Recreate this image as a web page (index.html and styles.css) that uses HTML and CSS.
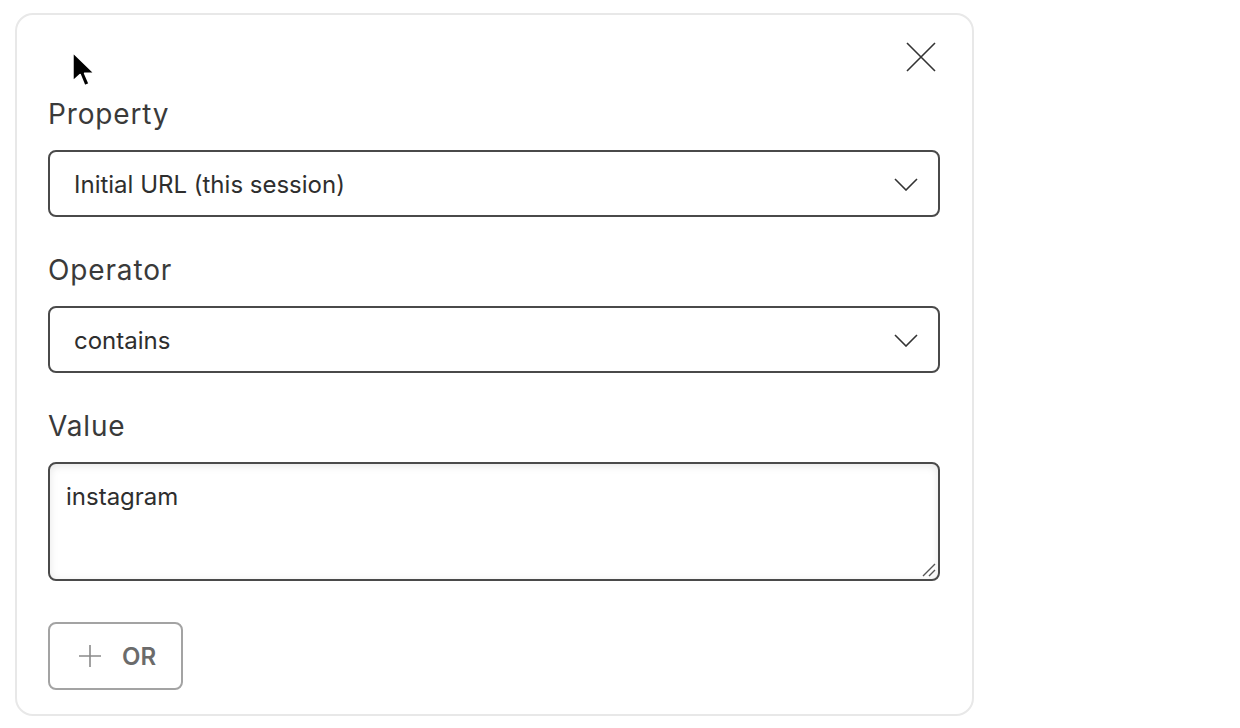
FILE: index.html
```html
<!DOCTYPE html>
<html>
<head>
<meta charset="utf-8">
<link rel="stylesheet" href="styles.css">
</head>
<body>
<div class="card">
  <div class="header">
    <svg class="close" width="30" height="30" viewBox="0 0 30 30"><path d="M1 1 L29 29 M29 1 L1 29" stroke="#333" stroke-width="1.6" fill="none"/></svg>
  </div>
  <div class="label first">Property</div>
  <div class="select">
    <span class="select-text">Initial URL (this session)</span>
    <svg class="chev" width="24" height="13" viewBox="0 0 24 13"><path d="M1 1 L12 12 L23 1" stroke="#333" stroke-width="1.6" fill="none"/></svg>
  </div>
  <div class="label">Operator</div>
  <div class="select">
    <span class="select-text">contains</span>
    <svg class="chev" width="24" height="13" viewBox="0 0 24 13"><path d="M1 1 L12 12 L23 1" stroke="#333" stroke-width="1.6" fill="none"/></svg>
  </div>
  <div class="label">Value</div>
  <div class="value-wrap">
    <textarea class="value">instagram</textarea>
    <svg class="grip" width="16" height="16" viewBox="0 0 16 16"><path d="M2 14 L14 2 M8 14 L14 8" stroke="#555" stroke-width="1.4" fill="none"/></svg>
  </div>
  <div class="actions">
    <button class="or-btn">
      <svg width="22" height="22" viewBox="0 0 22 22"><path d="M11 0 V22 M0 11 H22" stroke="#8a8a8a" stroke-width="1.6" fill="none"/></svg>
      <span>OR</span>
    </button>
  </div>
  <svg class="cursor" width="32" height="42" viewBox="0 0 24 32"><path d="M2 1 L2 23 L7.5 18 L11 26.5 L14.5 25 L11 17 L18.5 17 Z" fill="#000" stroke="#fff" stroke-width="1.3" stroke-linejoin="round"/></svg>
</div>
</body>
</html>
```
FILE: styles.css
```css
* { box-sizing: border-box; }
html, body { margin: 0; padding: 0; background: #fff; }
body { font-family: Inter, "Noto Sans", sans-serif; color: #333; }
.card {
  position: relative;
  margin: 13px 0 0 15px;
  width: 959px;
  height: 703px;
  border: 2px solid #e8e8e8;
  border-radius: 18px;
  padding: 0 32px 0 31px;
  display: flex;
  flex-direction: column;
}
.header {
  display: flex;
  justify-content: flex-end;
  padding-top: 27px;
  padding-right: 4px;
  height: 57px;
}
.close { display: block; }
.label {
  font-size: 28px;
  line-height: 34px;
  letter-spacing: 0.85px;
  color: #3a3a3a;
  margin-top: 36px;
  margin-bottom: 19px;
}
.label.first { margin-top: 25px; }
.select {
  height: 67px;
  border: 2px solid #4a4a4a;
  border-radius: 8px;
  display: flex;
  align-items: center;
  justify-content: space-between;
  padding: 2px 20px 0 24px;
}
.select-text {
  font-size: 24px;
  line-height: 29px;
  color: #2e2e2e;
}
.chev { display: block; }
.value-wrap { position: relative; }
.value {
  display: block;
  width: 100%;
  height: 119px;
  border: 2px solid #4a4a4a;
  border-radius: 8px;
  padding: 18px 16px;
  font-family: Inter, "Noto Sans", sans-serif;
  font-size: 24px;
  line-height: 29px;
  color: #2e2e2e;
  box-shadow: inset 0 2px 8px rgba(0,0,0,0.1);
  background: #fff;
  outline: none;
  resize: none;
}
.grip {
  position: absolute;
  right: 3px;
  bottom: 3px;
}
.actions {
  margin-top: 41px;
  display: flex;
}
.or-btn {
  width: 135px;
  height: 68px;
  border: 2px solid #a3a3a3;
  border-radius: 8px;
  background: #fff;
  display: flex;
  align-items: center;
  padding: 0 0 0 29px;
  gap: 21px;
  font-family: Inter, "Noto Sans", sans-serif;
  font-size: 24px;
  font-weight: 600;
  color: #6b6b6b;
}
.or-btn svg { display: block; }
.cursor {
  position: absolute;
  left: 53px;
  top: 36px;
}
```
